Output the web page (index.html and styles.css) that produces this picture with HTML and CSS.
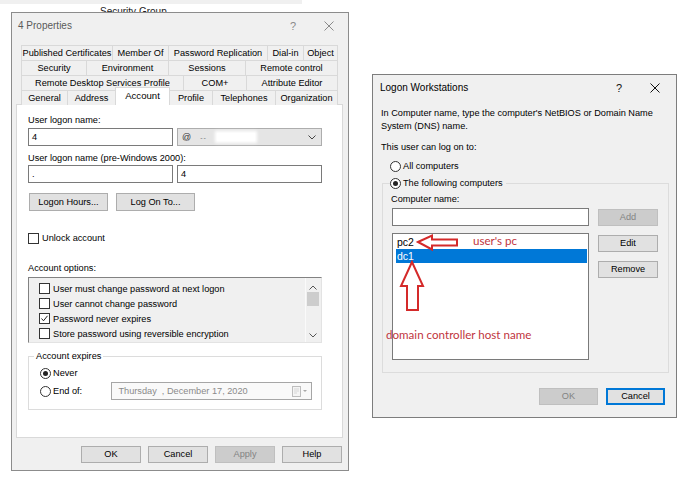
FILE: index.html
```html
<!DOCTYPE html>
<html>
<head>
<meta charset="utf-8">
<link rel="stylesheet" href="styles.css">
</head>
<body>
<div class="bgwin"><span class="bgtext">Security Group</span></div>

<div class="dlg props">
  <div class="titlebar inactive">
    <span class="title">4 Properties</span>
    <span class="tbtn">?</span>
    <span class="tbtn"><svg width="10" height="10" viewBox="0 0 10 10"><path d="M0.5 0.5L9.5 9.5M9.5 0.5L0.5 9.5" stroke="currentColor" stroke-width="1" fill="none"/></svg></span>
  </div>
  <div class="pbody">
    <div class="tabs">
      <div class="tabrow r1"><div class="tab">Published Certificates</div><div class="tab">Member Of</div><div class="tab">Password Replication</div><div class="tab">Dial-in</div><div class="tab">Object</div></div>
      <div class="tabrow r2"><div class="tab">Security</div><div class="tab">Environment</div><div class="tab">Sessions</div><div class="tab">Remote control</div></div>
      <div class="tabrow r3"><div class="tab">Remote Desktop Services Profile</div><div class="tab">COM+</div><div class="tab">Attribute Editor</div></div>
      <div class="tabrow r4"><div class="tab">General</div><div class="tab">Address</div><div class="tab sel">Account</div><div class="tab">Profile</div><div class="tab">Telephones</div><div class="tab">Organization</div></div>
    </div>
    <div class="panel">
      <div class="lbl">User logon name:</div>
      <div class="inrow">
        <div class="input">4</div>
        <div class="combo"><span class="at">@</span><span class="dots">--</span><span class="redact"></span><svg class="chev" width="8" height="5" viewBox="0 0 8 5"><path d="M0.5 0.5L4 4L7.5 0.5" stroke="#444" fill="none"/></svg></div>
      </div>
      <div class="lbl l2">User logon name (pre-Windows 2000):</div>
      <div class="inrow r2in">
        <div class="input">.</div>
        <div class="input">4</div>
      </div>
      <div class="btnrow">
        <div class="btn wide">Logon Hours...</div>
        <div class="btn wide">Log On To...</div>
      </div>
      <div class="chkrow unlock"><span class="chk"></span><span>Unlock account</span></div>
      <div class="lbl l3">Account options:</div>
      <div class="optlist">
        <div class="opts">
          <div class="chkrow opt"><span class="chk"></span><span>User must change password at next logon</span></div>
          <div class="chkrow opt"><span class="chk"></span><span>User cannot change password</span></div>
          <div class="chkrow opt"><span class="chk on"><svg width="9" height="9" viewBox="0 0 9 9"><path d="M1.5 4.5L3.5 6.8L7.5 1.8" stroke="#222" stroke-width="1" fill="none"/></svg></span><span>Password never expires</span></div>
          <div class="chkrow opt"><span class="chk"></span><span>Store password using reversible encryption</span></div>
        </div>
        <div class="sbar">
          <svg class="sarr" width="8" height="5" viewBox="0 0 8 5"><path d="M0.5 4.5L4 1L7.5 4.5" stroke="#555" fill="none"/></svg>
          <div class="thumb"></div>
          <div class="sfill"></div>
          <svg class="sarr" width="8" height="5" viewBox="0 0 8 5"><path d="M0.5 0.5L4 4L7.5 0.5" stroke="#555" fill="none"/></svg>
        </div>
      </div>
      <fieldset class="grp expires">
        <legend>Account expires</legend>
        <div class="radrow never"><span class="rad on"></span><span>Never</span></div>
        <div class="radrow endof"><span class="radlab"><span class="rad"></span><span>End of:</span></span>
          <div class="datepick"><span>Thursday &nbsp;, December 17, 2020</span>
            <svg class="cal" width="16" height="11" viewBox="0 0 16 11"><rect x="0.5" y="0.5" width="8" height="10" fill="#f4f4f4" stroke="#bdbdbd"/><path d="M2 3H7M2 5H7M2 7H5" stroke="#d6d6d6"/><path d="M11 4H15L13 6Z" fill="#a8a8a8"/></svg>
          </div>
        </div>
      </fieldset>
    </div>
    <div class="footer">
      <div class="btn fb">OK</div>
      <div class="btn fb">Cancel</div>
      <div class="btn fb dis">Apply</div>
      <div class="btn fb">Help</div>
    </div>
  </div>
</div>

<div class="dlg logon">
  <div class="titlebar">
    <span class="title">Logon Workstations</span>
    <span class="tbtn">?</span>
    <span class="tbtn"><svg width="10" height="10" viewBox="0 0 10 10"><path d="M0.5 0.5L9.5 9.5M9.5 0.5L0.5 9.5" stroke="currentColor" stroke-width="1" fill="none"/></svg></span>
  </div>
  <div class="lbody">
    <div class="desc">In Computer name, type the computer's NetBIOS or Domain Name<br>System (DNS) name.</div>
    <div class="lbl canlog">This user can log on to:</div>
    <div class="radrow allc"><span class="rad"></span><span>All computers</span></div>
    <fieldset class="grp follow">
      <legend><span class="radrow"><span class="rad on"></span><span>The following computers</span></span></legend>
      <div class="lbl cname">Computer name:</div>
      <div class="addrow">
        <div class="input cin"></div>
        <div class="btn sb dis">Add</div>
      </div>
      <div class="listrow">
        <div class="clist">
          <div class="item">pc2</div>
          <div class="item selitem">dc1</div>
        </div>
        <div class="sidebtns">
          <div class="btn sb">Edit</div>
          <div class="btn sb rem">Remove</div>
        </div>
      </div>
    </fieldset>
    <div class="lfooter">
      <div class="btn lb dis">OK</div>
      <div class="btn lb focus">Cancel</div>
    </div>
  </div>
</div>

<svg class="annot" width="690" height="487" viewBox="0 0 690 487">
  <path d="M418 242L432 235.5V239.5H457V245.5H432V249.5Z" fill="none" stroke="#d42a2a" stroke-width="2" stroke-linejoin="miter"/>
  <path d="M412 262L423 286H418V310H407V286H401Z" fill="none" stroke="#d42a2a" stroke-width="2" stroke-linejoin="miter"/>
</svg>
<div class="note n1">user's pc</div>
<div class="note n2">domain controller host name</div>
</body>
</html>
```
FILE: styles.css
```css
* { box-sizing: border-box; }
html, body { margin: 0; padding: 0; }
body {
  width: 690px; height: 487px; position: relative; overflow: hidden;
  background: #fff; color: #000;
  font-family: "Liberation Sans", Arial, sans-serif; font-size: 9.2px;
}
.bgwin {
  position: absolute; left: 0; top: 0; width: 302px; height: 14px;
  border-top: 4px solid #f0f0f0; background: #fff;
}
.bgtext { position: absolute; left: 100px; top: 2px; font-size: 10px; line-height: 12px; color: #222; }

.dlg {
  position: absolute; background: #f0f0f0; border: 1px solid #8c8c8c;
  display: flex; flex-direction: column;
}
.props { left: 11px; top: 12px; width: 338px; height: 459px; }
.logon { left: 372px; top: 74px; width: 305px; height: 344px; border-color: #7d7d7d; }

.titlebar { height: 25px; display: flex; align-items: center; padding-left: 6px; font-size: 10px; flex: none; }
.logon .titlebar { padding-left: 7px; padding-right: 3px; }
.props .titlebar { padding-right: 1px; }
.titlebar .title { flex: 1; }
.titlebar .tbtn { width: 36px; display: flex; align-items: center; justify-content: center; font-size: 11px; color: #111; }
.titlebar.inactive .title { color: #5a5a5a; }
.titlebar.inactive .tbtn { color: #8a8a8a; }

.pbody { padding: 7px 5px 0 4px; }
.tabs { margin: 0 5px; position: relative; z-index: 1; }
.tabrow { display: grid; height: 15px; }
.tabrow.r4 { height: 14px; }
.r1 { grid-template-columns: 91px 56px 99px 36px 35px; }
.r2 { grid-template-columns: 65px 82px 77px 93px; }
.r3 { grid-template-columns: 162px 63px 92px; }
.r4 { grid-template-columns: 46px 48px 54px 43px 63px 63px; }
.tab {
  border-top: 1px solid #d9d9d9; border-left: 1px solid #d9d9d9;
  background: #f0f0f0; text-align: center; line-height: 14px; white-space: nowrap; overflow: hidden;
}
.tab:last-child { border-right: 1px solid #d9d9d9; }
.tab.sel {
  background: #fff; margin-top: -3px; height: 18px; line-height: 15px;
  border-right: 1px solid #d9d9d9; margin-right: -1px; position: relative; z-index: 2; font-size: 9.6px;
}

.panel { background: #fff; border: 1px solid #d9d9d9; height: 334px; padding: 9px 20px 0 11px; }
.lbl { line-height: 12px; height: 12px; white-space: nowrap; }
.l2 { margin-top: 6px; }
.l3 { margin-top: 18px; }
.inrow { display: flex; gap: 4px; margin-top: 2px; }
.r2in { margin-top: 1px; }
.input { width: 145px; height: 18px; border: 1px solid #7a7a7a; background: #fff; padding: 0 3px; line-height: 16px; }
.combo {
  width: 145px; height: 18px; border: 1px solid #adadad; background: #e5e5e5;
  display: flex; align-items: center; padding: 0 5px 0 4px; position: relative;
}
.combo .at { font-size: 9px; color: #333; }
.combo .dots { margin-left: 9px; color: #777; font-size: 7px; letter-spacing: 1px; }
.combo .redact { width: 38px; height: 8px; margin-left: 10px; background: #fff; box-shadow: 0 0 3px 2px #fff; }
.combo .chev { margin-left: auto; }

.btnrow { display: flex; gap: 8px; margin-top: 10px; padding-left: 1px; }
.btn {
  height: 18px; background: #e1e1e1; border: 1px solid #adadad;
  text-align: center; line-height: 16px; white-space: nowrap;
}
.btn.wide { width: 79px; }
.btn.dis { background: #cccccc; border-color: #bfbfbf; color: #838383; }

.chkrow { display: flex; align-items: center; gap: 3px; white-space: nowrap; }
.unlock { margin-top: 21px; height: 12px; }
.chk { width: 11px; height: 11px; border: 1px solid #333; background: #fff; flex: none; display: flex; align-items: center; justify-content: center; }

.optlist {
  margin-top: 3px; height: 66px; display: flex;
  border: 1px solid; border-color: #828282 #e3e3e3 #e3e3e3 #828282; background: #f0f0f0;
}
.opts { flex: 1; padding: 3px 0 0 10px; }
.opt { height: 15px; }
.sbar { width: 15px; margin-right: 1px; border-left: 1px solid #fafafa; display: flex; flex-direction: column; align-items: center; padding: 7px 0 4px; }
.thumb { width: 12px; height: 14px; background: #cdcdcd; margin-top: 2px; }
.sfill { flex: 1; }

.grp { margin: 7px 0 0; border: 1px solid #dcdcdc; min-width: 0; }
.expires { padding: 0 9px 8px 5px; height: 60px; }
.grp legend { padding: 0 2px; line-height: 12px; }
.radrow { display: flex; align-items: center; gap: 2px; white-space: nowrap; }
.rad {
  width: 11px; height: 11px; border: 1px solid #333; border-radius: 50%; background: #fff;
  flex: none; display: flex; align-items: center; justify-content: center;
}
.rad.on::after { content: ""; width: 5px; height: 5px; border-radius: 50%; background: #222; }
.never { margin: 5px 0 0 6px; height: 12px; }
.endof { margin: 3px 0 0 6px; }
.radlab { display: flex; align-items: center; gap: 2px; width: 70px; }
.datepick {
  width: 202px; height: 18px; border: 1px solid #a6a6a6; background: #f9f9f9;
  display: flex; align-items: center; padding: 0 3px 0 6px; color: #8a8a8a;
}
.datepick .cal { margin-left: auto; }

.footer { display: flex; justify-content: flex-end; gap: 7px; margin-top: 8px; padding-right: 1px; }
.btn.fb { width: 60px; height: 17px; line-height: 15px; }

.lbody { padding: 7px 7px 0 8px; }
.desc { line-height: 13px; white-space: nowrap; }
.canlog { margin-top: 8px; }
.allc { margin: 7px 0 0 9px; height: 12px; }
.follow { margin: 4px 0 0 1px; padding: 0 9px 12px 9px; width: 287px; }
.follow legend { margin-left: -2px; padding: 0 3px 0 0; line-height: 14px; }
.cname { margin-top: 3px; margin-left: -1px; }
.addrow { display: flex; gap: 9px; margin-top: 3px; align-items: flex-start; }
.cin { width: 197px; }
.btn.sb { width: 60px; height: 17px; line-height: 15px; }
.addrow .sb { margin-top: 1px; }
.listrow { display: flex; gap: 9px; margin-top: 7px; }
.clist { width: 197px; height: 127px; border: 1px solid #7a7a7a; background: #fff; padding: 1px 1px 1px 3px; }
.item { height: 14px; line-height: 14px; padding-left: 1px; font-size: 10.5px; }
.selitem { background: #0078d7; color: #fff; }
.sidebtns { display: flex; flex-direction: column; gap: 9px; padding-top: 2px; }
.lfooter { display: flex; justify-content: flex-end; gap: 8px; margin-top: 15px; padding-right: 4px; }
.btn.lb { width: 59px; height: 17px; line-height: 15px; }
.btn.focus { border: 2px solid #0078d7; line-height: 13px; }

.annot { position: absolute; left: 0; top: 0; z-index: 10; pointer-events: none; }
.note {
  position: absolute; z-index: 11; color: #bf3540; white-space: nowrap;
  font-family: Lato, "Open Sans", sans-serif; font-size: 11.6px; line-height: 14px;
}
.n1 { left: 473px; top: 234px; }
.n2 { left: 386px; top: 328px; }
```
